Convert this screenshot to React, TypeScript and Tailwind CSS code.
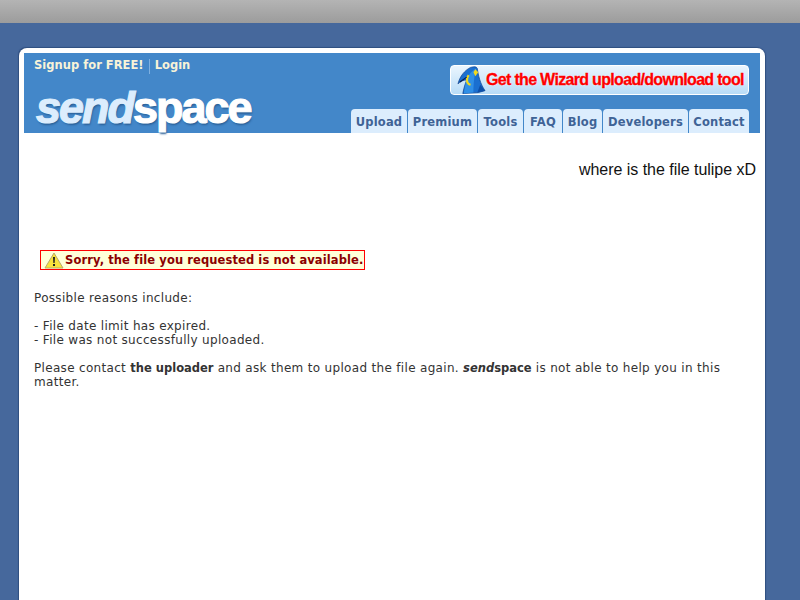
const TABS = [
  { label: "Upload", width: "w-[56px]" },
  { label: "Premium", width: "w-[69px]" },
  { label: "Tools", width: "w-[45px]" },
  { label: "FAQ", width: "w-[38px]" },
  { label: "Blog", width: "w-[39px]" },
  { label: "Developers", width: "w-[85px]" },
  { label: "Contact", width: "w-[60px]" },
];

function Wizard() {
  return (
    <svg width="29" height="30" viewBox="0 0 30 30" className="shrink-0">
      <path d="M1 19 C3 11 8 5 14 2 C18 1 20 1 21 3 C22 10 24 19 29 26 L22 28 L6 29 C7 24 8 20 10 15 C7 15 4 16 1 19 Z" fill="#1a6fd0" stroke="#0c3f8a" strokeWidth="0.7" />
      <path d="M10 14 C13 8 16 5 20 3 C18 9 17 18 17 28 L7 29 C8 23 9 18 10 14 Z" fill="#2f8fe6" />
      <path d="M12 10 C9 14 10 19 14 20" fill="none" stroke="#f2d81c" strokeWidth="2.2" />
      <path d="M19 4 L22 7 L19 11 L17 7 Z" fill="#f2d81c" />
      <path d="M3 17 L10 12" stroke="#0a1f50" strokeWidth="1.2" />
      <path d="M21 28 L29 26 L24 20 Z" fill="#0c4fa8" />
    </svg>
  );
}

function Logo() {
  return (
    <div className="whitespace-nowrap font-['Liberation_Sans',sans-serif] text-[45px] leading-[40px] font-bold tracking-[-2px] [-webkit-text-stroke:1.2px_currentColor] [text-shadow:1px_2px_2px_#2a5f96]">
      <span className="italic text-[#dcedfd]">send</span>
      <span className="text-white">space</span>
    </div>
  );
}

export default function App() {
  return (
    <div className="h-[600px] w-[800px] overflow-hidden bg-[#46689c] font-['DejaVu_Sans',sans-serif] text-[12px]">
      <div className="h-[23px] bg-gradient-to-b from-[#b4b4b4] to-[#9c9c9c]" />
      <div className="ml-[19px] mt-[25px] h-[560px] w-[746px] rounded-t-[8px] bg-white p-[5px] shadow-[-1px_-1px_1px_#2f4f80,1px_0_1px_#2f4f80]">
        <div className="flex h-[80px] justify-between bg-[#4387c9]">
          <div className="pl-[10px] pt-[5px]">
            <div className="flex h-[16px] items-center text-[11.5px] font-bold tracking-[0.02px] whitespace-nowrap text-[#f8f3d8]">
              <span>Signup for FREE!</span>
              <span className="mx-[5px] h-[15px] w-px bg-[#7fb0e0]" />
              <span>Login</span>
            </div>
            <div className="ml-[2px] mt-[14px]">
              <Logo />
            </div>
          </div>
          <div className="flex flex-col items-end pr-[11px] pt-[12px]">
            <div className="flex h-[30px] w-[299px] items-center rounded-[4px] border border-white bg-gradient-to-b from-[#eaf5fe] to-[#b8dcf7] pl-[6px]">
              <Wizard />
              <span className="whitespace-nowrap font-['Liberation_Sans',sans-serif] text-[16px] font-bold tracking-[-0.68px] text-[#ff0000] [-webkit-text-stroke:0.3px_currentColor] [text-shadow:0_0_2px_#ffffff]">
                Get the Wizard upload/download tool
              </span>
            </div>
            <div className="mt-[14px] flex gap-px">
              {TABS.map((tab) => (
                <div
                  key={tab.label}
                  className={`${tab.width} flex h-[24px] items-center justify-center rounded-t-[4px] bg-[#dcedfd] pt-[3px] text-[11.5px] font-bold tracking-[0.2px] text-[#3f6396]`}
                >
                  {tab.label}
                </div>
              ))}
            </div>
          </div>
        </div>
        <div className="pt-[28px] pr-[4px] text-right font-['Liberation_Sans',sans-serif] text-[16px] leading-[18px] tracking-[-0.03px] text-[#111111]">
          where is the file tulipe xD
        </div>
        <div className="ml-[16px] mt-[71px] flex h-[20px] w-[325px] items-center border border-[#ff0000] bg-[#ffffd8] pl-[3px] pt-[2px] text-[11.5px] font-bold tracking-[0.1px] whitespace-nowrap text-[#8b0000]">
          <svg width="20" height="17" viewBox="0 0 20 17" className="mr-[1px] -mt-[2px] shrink-0">
            <path d="M10 1 L19 16 L1 16 Z" fill="#f7e33c" stroke="#b9a96a" strokeWidth="1" strokeLinejoin="round" />
            <path d="M9 5 H11 L10.6 11 H9.4 Z" fill="#222222" />
            <rect x="9" y="12" width="2" height="2" fill="#222222" />
          </svg>
          Sorry, the file you requested is not available.
        </div>
        <div className="ml-[10px] mt-[21px] w-[710px] leading-[14px] tracking-[0.32px] text-[#333333]">
          <p>Possible reasons include:</p>
          <p className="mt-[14px]">- File date limit has expired.</p>
          <p>- File was not successfully uploaded.</p>
          <p className="mt-[14px]">
            Please contact <b className="text-[11.5px] tracking-normal">the uploader</b> and ask them to upload the file again. <b className="text-[11.5px] tracking-normal"><i>send</i>space</b> is not able to help you in this matter.
          </p>
        </div>
      </div>
    </div>
  );
}
